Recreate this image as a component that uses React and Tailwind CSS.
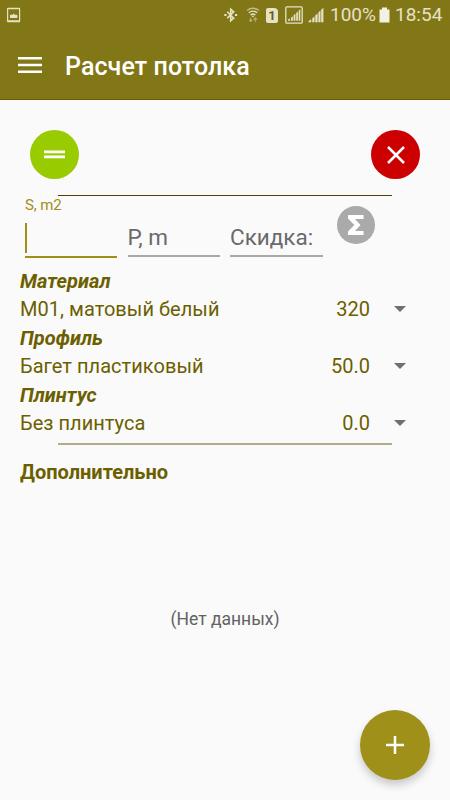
import React from 'react'

const rows = [
  { title: 'Материал', name: 'М01, матовый белый', price: '320' },
  { title: 'Профиль', name: 'Багет пластиковый', price: '50.0' },
  { title: 'Плинтус', name: 'Без плинтуса', price: '0.0' },
]

function StatusBar() {
  return (
    <div className="flex h-[30px] items-center text-[#e6e2c6]">
      <svg className="ml-[6px] h-[16px] w-[16px]" viewBox="0 0 16 16" fill="currentColor">
        <path fillRule="evenodd" d="M2 .8h11.2q1 0 1 1v12.4q0 1-1 1H2q-1 0-1-1V1.800q0-1 1-1zM2.200 2.200v11h10.800v-11z" />
        <path d="M4 11V8.300l1.300-.9 1 .5 1.300-1.500 1.500 1.500 1-.5L11.400 8.300V11z" />
      </svg>

      <svg className="ml-[201px] h-[16px] w-[16px]" viewBox="0 0 16 16" fill="none" stroke="currentColor" strokeWidth="1.600">
        <path d="M4.300 4.800l6.400 6.300L7.700 13.700V2.300l3 2.500-6.400 6.300" />
        <path d="M1.300 8h2.200M12 8h2.200" strokeWidth="2" />
      </svg>

      <svg className="ml-[7px] h-[16px] w-[14px]" viewBox="0 0 14 16" fill="none" stroke="currentColor" strokeWidth="1.400">
        <path d="M1 3.500Q7-1 13 3.500" opacity=".65" />
        <path d="M2.800 5.800Q7 2.500 11.200 5.800M4.600 8Q7 6 9.400 8" />
        <path d="M5.600 8.800h2.800L7 10.500z" fill="currentColor" stroke="none" />
        <path d="M3.200 13h3L4.700 15zM7.800 12.500h3L9.300 10.500zM4.700 10.500v3M9.300 12v3" fill="currentColor" strokeWidth="1" opacity=".5" />
      </svg>

      <div className="ml-[6px] flex h-[15px] w-[12px] items-center justify-center rounded-[2px] rounded-tr-[4px] bg-[#e6e2c6] text-[13px] font-bold leading-none text-[#6a5f10]">1</div>

      <svg className="ml-[7px] h-[18px] w-[18px]" viewBox="0 0 18 18" fill="currentColor">
        <rect x=".8" y=".8" width="16.400" height="16.400" rx="1" fill="none" stroke="currentColor" strokeWidth="1.300" />
        <path d="M3 14.800v-1.200l2-1.200v2.400zM6 14.800v-3l1.800-1.500v4.500zM8.600 14.800V9.300l1.800-1.600v7.100zM11.200 14.800V7l1.700-1.500v9.300zM13.700 14.800V4.700L15.300 3.300v11.500z" />
      </svg>

      <svg className="ml-[5px] h-[16px] w-[17px]" viewBox="0 0 17 16" fill="currentColor">
        <path d="M.5 15.200v-1l2.700-2v3zM4.300 15.200v-3.900l2.200-1.900v5.800zM7.300 15.200V8.500l2.300-2.100v8.800zM10.400 15.200V5.600l2.100-2v11.600zM13.200 15.200V2.800L15.400.7v14.500z" />
      </svg>

      <span className="ml-[5px] w-[48px] text-[19px] leading-[30px]">100%</span>
      <svg className="ml-[1px] h-[16px] w-[11px]" viewBox="0 0 11 16" fill="#f3f1e4">
        <path d="M3 .5h5v2h2.500V15.500H.5V2.500H3z" />
      </svg>
      <span className="ml-[5px] text-[19px] leading-[30px]">18:54</span>
    </div>
  )
}

function App() {
  return (
    <div className="relative flex h-[800px] w-[450px] flex-col overflow-hidden bg-[#fafafa] font-['Roboto',sans-serif] text-[20px] text-[#6b5f00]">

      <header className="h-[100px] border-b border-[#665c0c] bg-[#827717]">
        <StatusBar />
        <div className="flex h-[70px] items-center text-white">
          <button className="ml-[18px]">
            <svg className="h-[16px] w-[24px]" viewBox="0 0 24 16" fill="#fff">
              <path d="M0 0h24v2.500H0zM0 6.750h24v2.500H0zM0 13.500h24v2.500H0z" />
            </svg>
          </button>
          <h1 className="ml-[23px] pt-[4px] text-[25px] font-medium leading-[30px] tracking-[0.08px]">Расчет потолка</h1>
        </div>
      </header>

      <main className="flex flex-col">
        <div className="mt-[30px] flex justify-between px-[30px]">
          <button className="flex h-[49px] w-[49px] flex-col items-center justify-center rounded-full bg-[#99cc00]">
            <svg className="h-[9px] w-[21px]" viewBox="0 0 21 9" fill="#fff">
              <path d="M0 .5h21v2.800H0zM0 5.500h21v2.800H0z" />
            </svg>
          </button>
          <button className="flex h-[49px] w-[49px] items-center justify-center rounded-full bg-[#cc0000]">
            <svg className="h-[18px] w-[18px]" viewBox="0 0 18 18" stroke="#fff" strokeWidth="2.500">
              <path d="M1 1l16 16M17 1L1 17" />
            </svg>
          </button>
        </div>

        <div className="mx-[58px] mt-[16px] h-px bg-[#4c4300]" />

        {/* area / perimeter / discount */}
        <div className="flex h-[62px] pl-[25px]">
          <div className="flex w-[92px] flex-col border-b-[2px] border-[#9e9016]">
            <span className="text-[15px] leading-[18px] tracking-[-0.1px] text-[#9e8f14]">S, m2</span>
            <div className="mt-[9px] h-[30px] w-[2px] bg-[#9e8f14]" />
          </div>
          <div className="ml-[10.500px] flex h-[61px] w-[92.500px] items-end border-b-[2px] border-[#a8a8a8] pb-[4px] text-[22.500px] leading-[28px] text-[#6a6a6a]">P, m</div>
          <div className="ml-[10px] flex h-[61px] w-[92.500px] items-end border-b-[2px] border-[#a8a8a8] pb-[4px] text-[22.500px] leading-[28px] text-[#6a6a6a]">Скидка:</div>
          <button className="ml-[14.500px] mt-[10px] flex h-[38px] w-[38px] items-center justify-center rounded-full bg-[#aaaaaa]">
            <svg className="h-[20px] w-[16px]" viewBox="0 0 16 20" fill="#fff">
              <path d="M0 0h15.500v4H7l5.500 6L7 16h8.500v4H0v-3.500L6.300 10 0 3.500z" />
            </svg>
          </button>
        </div>

        <div className="mt-[9px] px-[20px]">
          {rows.map((row) => (
            <div key={row.title} className="h-[57px]">
              <h2 className="font-bold italic leading-[28px] tracking-[0.04px]">{row.title}</h2>
              <div className="flex items-center leading-[29px]">
                <span className="flex-1 tracking-[0.04px]">{row.name}</span>
                <span>{row.price}</span>
                <svg className="mb-[2px] ml-[24px] mr-[24px] h-[6px] w-[12px]" viewBox="0 0 12 6" fill="#6f6f6f">
                  <path d="M0 0h12L6 6z" />
                </svg>
              </div>
            </div>
          ))}
        </div>

        <div className="mx-[58px] mt-[5px] h-[2px] bg-[#b3ac85]" />
        <h2 className="mt-[13px] px-[20px] font-bold leading-[28px]">Дополнительно</h2>
        <p className="mt-[119px] text-center text-[17.500px] leading-[28px] text-[#626262]">(Нет данных)</p>
      </main>

      <button className="absolute bottom-[20px] right-[20px] flex h-[70px] w-[70px] items-center justify-center rounded-full bg-[#9e9018] shadow-[0_5px_9px_rgba(0,0,0,0.2)]">
        <svg className="h-[18px] w-[18px]" viewBox="0 0 18 18" stroke="#fff" strokeWidth="2.500">
          <path d="M9 0v18M0 9h18" />
        </svg>
      </button>
    </div>
  )
}

export default App
